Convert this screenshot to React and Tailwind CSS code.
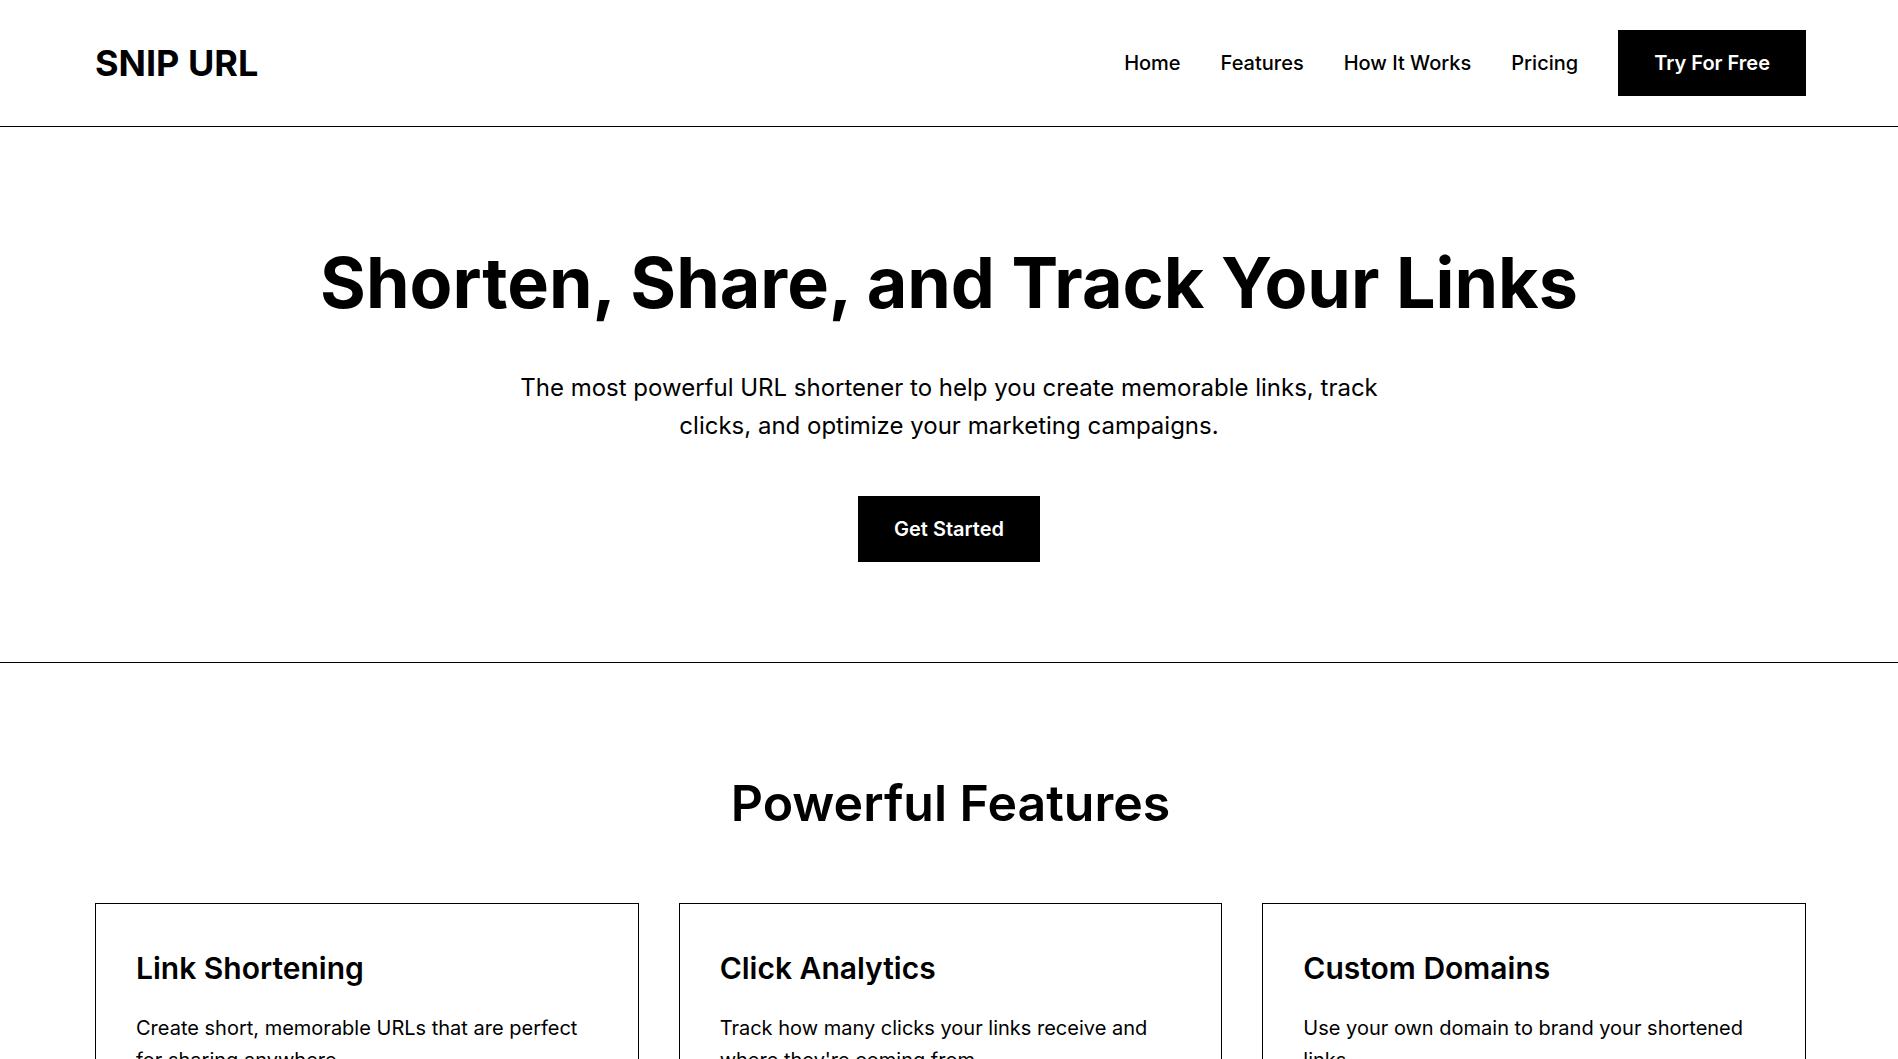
import React from 'react';

const navLinks = ['Home', 'Features', 'How It Works', 'Pricing'];

const features = [
  {
    title: 'Link Shortening',
    text: 'Create short, memorable URLs that are perfect for sharing anywhere.',
  },
  {
    title: 'Click Analytics',
    text: "Track how many clicks your links receive and where they're coming from.",
  },
  {
    title: 'Custom Domains',
    text: 'Use your own domain to brand your shortened links.',
  },
];

export default function App() {
  return (
    <div className="min-h-screen bg-white text-black font-['Inter','Liberation_Sans',sans-serif]">
      {/* Header */}
      <header className="h-[127px] border-b border-black pl-[95px] pr-[92px] flex items-center justify-between">
        <a href="#" className="text-4xl font-bold">SNIP URL</a>
        <nav className="flex items-center gap-10">
          {navLinks.map((link) => (
            <a key={link} href="#" className="text-xl font-medium">
              {link}
            </a>
          ))}
          <button className="h-[66px] px-[36px] bg-black text-white text-xl font-semibold">
            Try For Free
          </button>
        </nav>
      </header>

      {/* Hero */}
      <section className="pt-[114px] pb-[100px] border-b border-black text-center">
        <h1 className="text-[70px] leading-[1.2] font-bold">
          Shorten, Share, and Track Your Links
        </h1>
        <p className="mt-[44px] mx-auto max-w-[900px] text-2xl leading-[1.6]">
          The most powerful URL shortener to help you create memorable links, track clicks, and
          optimize your marketing campaigns.
        </p>
        <button className="mt-[50px] h-[66px] px-[36px] bg-black text-white text-xl font-semibold">
          Get Started
        </button>
      </section>

      {/* Features */}
      <section className="pt-[110px] pb-[100px] pl-[95px] pr-[92px]">
        <h2 className="text-[50px] leading-[1.2] font-semibold text-center mb-[70px]">
          Powerful Features
        </h2>
        <div className="grid grid-cols-3 gap-10">
          {features.map((f) => (
            <div key={f.title} className="border border-black px-10 pt-[46px] pb-10">
              <h3 className="text-3xl leading-[1.2] font-semibold">{f.title}</h3>
              <p className="mt-[26px] text-xl leading-[1.6]">{f.text}</p>
            </div>
          ))}
        </div>
      </section>
    </div>
  );
}
